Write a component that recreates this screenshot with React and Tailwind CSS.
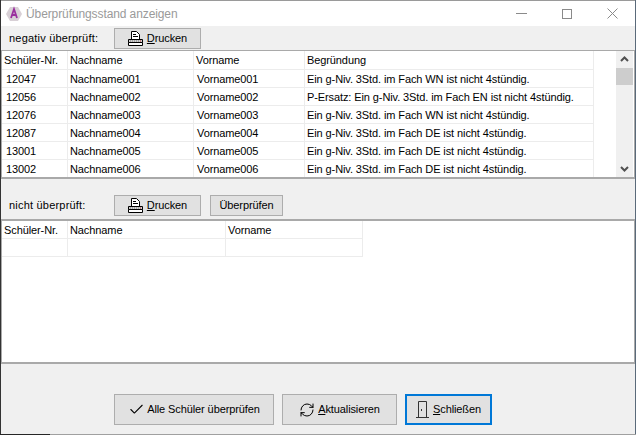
import { Check, RefreshCw } from 'lucide-react'

const font = { fontFamily: '"Liberation Sans", Arial, sans-serif' }

const rows = [
  ['12047', 'Nachname001', 'Vorname001', 'Ein g-Niv. 3Std. im Fach WN ist nicht 4stündig.'],
  ['12056', 'Nachname002', 'Vorname002', 'P-Ersatz: Ein g-Niv. 3Std. im Fach EN ist nicht 4stündig.'],
  ['12076', 'Nachname003', 'Vorname003', 'Ein g-Niv. 3Std. im Fach WN ist nicht 4stündig.'],
  ['12087', 'Nachname004', 'Vorname004', 'Ein g-Niv. 3Std. im Fach DE ist nicht 4stündig.'],
  ['13001', 'Nachname005', 'Vorname005', 'Ein g-Niv. 3Std. im Fach DE ist nicht 4stündig.'],
  ['13002', 'Nachname006', 'Vorname006', 'Ein g-Niv. 3Std. im Fach DE ist nicht 4stündig.'],
]

function PrinterIcon() {
  return (
    <svg width="15" height="15" viewBox="0 0 15 15" className="shrink-0">
      <path d="M3.5 0.5h5l3 3v5h-8z" fill="#fff" stroke="#000" />
      <path d="M5 3.5h3M5 5.5h5" stroke="#000" />
      <path d="M0.5 8.5h14v3h-14z" fill="#d0d0d0" stroke="#000" />
      <path d="M0.5 11.5h14v3h-14z" fill="#fff" stroke="#000" />
      <path d="M2 10h10" stroke="#777" strokeDasharray="1 1" />
      <path d="M12 10h1" stroke="#c03030" />
    </svg>
  )
}

function DoorIcon() {
  return (
    <svg width="13" height="17" viewBox="0 0 13 17" className="shrink-0">
      <path d="M2.5 16.5v-16h8v16" fill="none" stroke="#333" />
      <path d="M0 16.5h13" stroke="#333" />
      <path d="M5 8h1v2H5z" fill="#333" />
    </svg>
  )
}

function PrintButton() {
  return (
    <button className="w-[87px] h-[21px] flex items-center justify-center gap-[4px] bg-[#e1e1e1] border border-[#adadad] text-black">
      <PrinterIcon />
      <span><u>D</u>rucken</span>
    </button>
  )
}

function Cell({ w, pad = 'px-[2px]', children }) {
  return (
    <div className={`${w} ${pad} shrink-0 h-full flex items-center pt-[1px] border-r border-[#ececec] overflow-hidden whitespace-nowrap`}>
      {children}
    </div>
  )
}

function BottomButton({ w, focus, children }) {
  return (
    <button className={`${w} h-[31px] flex items-center justify-center bg-[#e1e1e1] text-black ${focus ? 'border-2 border-[#0078d7]' : 'border border-[#adadad]'}`}>
      {children}
    </button>
  )
}

export default function App() {
  return (
    <div style={font} className="w-[636px] h-[435px] flex flex-col text-[11px] tracking-[-0.1px] text-black overflow-hidden">
      <div className="h-[434px] shrink-0 flex">
        <div className="w-[1px] shrink-0 bg-[#333333]" />
        <div className="w-[634px] shrink-0 flex flex-col bg-[#f0f0f0] border-t border-[#9a9a9a]">
          {/* title bar */}
          <div className="h-[25px] shrink-0 flex items-center bg-white pl-[4px]">
            <svg width="18" height="18" viewBox="0 0 18 18" className="shrink-0">
              <path d="M5 2h8l4 7-4 7H5L1 9z" fill="#d8d0d6" />
              <path d="M6 13L9 4l3 9M7 10h4" fill="none" stroke="#9a2f9e" strokeWidth="1.8" />
            </svg>
            <span className="ml-[3px] text-[12px] tracking-[-0.1px] text-[#9a9a9a]">Überprüfungsstand anzeigen</span>
            <div className="ml-auto flex items-center">
              <div className="w-[11px] h-px bg-[#8a8a8a] mr-[35px]" />
              <div className="w-[10px] h-[10px] border border-[#8a8a8a] mr-[35px]" />
              <svg width="11" height="11" viewBox="0 0 11 11" className="mr-[17px]">
                <path d="M0.5 0.5l10 10M10.5 0.5l-10 10" stroke="#8a8a8a" />
              </svg>
            </div>
          </div>

          {/* negativ überprüft */}
          <div className="h-[24px] shrink-0 flex items-center pl-[8px]">
            <span className="w-[105px] tracking-[0.2px]">negativ überprüft:</span>
            <PrintButton />
          </div>
          <div className="h-[129px] shrink-0 flex bg-white border-t border-x border-b-2 border-[#a9a9a9] overflow-hidden">
            <div className="w-[592px] shrink-0 flex flex-col">
              <div className="h-[19px] shrink-0 flex border-b border-[#ececec]">
                <Cell w="w-[66px]">Schüler-Nr.</Cell>
                <Cell w="w-[126px]">Nachname</Cell>
                <Cell w="w-[111px]">Vorname</Cell>
                <Cell w="w-[289px]">Begründung</Cell>
              </div>
              {rows.map((r) => (
                <div key={r[0]} className="h-[18px] shrink-0 flex border-b border-[#ececec]">
                  <Cell w="w-[66px]" pad="px-[4px]">{r[0]}</Cell>
                  <Cell w="w-[126px]">{r[1]}</Cell>
                  <Cell w="w-[111px]" pad="px-[3px]">{r[2]}</Cell>
                  <Cell w="w-[289px]">{r[3]}</Cell>
                </div>
              ))}
            </div>
            <div className="w-[22px] shrink-0" />
            <div className="w-[17px] shrink-0 flex flex-col items-center bg-[#f0f0f0]">
              <svg width="17" height="17" viewBox="0 0 17 17" className="shrink-0">
                <path d="M5 10l3.5-3.5L12 10" fill="none" stroke="#505050" strokeWidth="2" />
              </svg>
              <div className="w-full h-[17px] bg-[#cdcdcd]" />
              <svg width="17" height="17" viewBox="0 0 17 17" className="mt-auto shrink-0">
                <path d="M5 7l3.5 3.5L12 7" fill="none" stroke="#505050" strokeWidth="2" />
              </svg>
            </div>
          </div>

          {/* nicht überprüft */}
          <div className="h-[40px] shrink-0 flex items-end pl-[8px] pb-[3px]">
            <span className="w-[105px] pb-[3px] tracking-[0.2px]">nicht überprüft:</span>
            <PrintButton />
            <button className="ml-[9px] w-[73px] h-[21px] bg-[#e1e1e1] border border-[#adadad]">Überprüfen</button>
          </div>
          <div className="h-[145px] shrink-0 bg-white border-t-2 border-x border-b-2 border-[#a9a9a9]">
            <div className="w-[361px] flex flex-col">
              <div className="h-[18px] flex border-b border-[#ececec]">
                <Cell w="w-[66px]">Schüler-Nr.</Cell>
                <Cell w="w-[158px]">Nachname</Cell>
                <Cell w="w-[137px]">Vorname</Cell>
              </div>
              <div className="h-[18px] flex border-b border-[#ececec]">
                <Cell w="w-[66px]" />
                <Cell w="w-[158px]" />
                <Cell w="w-[137px]" />
              </div>
            </div>
          </div>

          {/* bottom buttons */}
          <div className="flex-1 flex pl-[113px] pt-[30px] gap-[8px]">
            <BottomButton w="w-[160px]">
              <Check size={17} strokeWidth={1.5} className="mr-[2px]" />
              Alle Schüler überprüfen
            </BottomButton>
            <BottomButton w="w-[115px]">
              <RefreshCw size={16} strokeWidth={1.5} className="mr-[3px]" />
              <span><u>A</u>ktualisieren</span>
            </BottomButton>
            <BottomButton w="w-[87px]" focus>
              <DoorIcon />
              <span className="ml-[4px]"><u>S</u>chließen</span>
            </BottomButton>
          </div>
        </div>
        <div className="flex-1 bg-[#5a6a7a]" />
      </div>
      <div className="flex-1 flex bg-[#a0a0a0]">
        <div className="w-[50px] bg-[#262626]" />
      </div>
    </div>
  )
}
